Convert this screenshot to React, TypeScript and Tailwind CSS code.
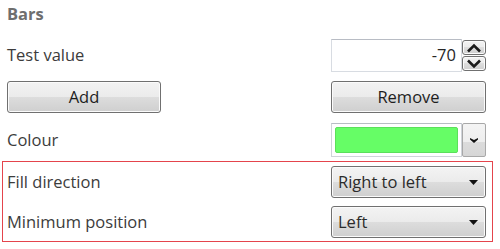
import React from "react";

const btn =
  "rounded-[3px] border border-[#707070] bg-[linear-gradient(to_bottom,#f3f3f3_0%,#ebebeb_50%,#dddddd_50%,#cfcfcf_100%)] shadow-[inset_0_0_0_1px_#fbfbfb]";

function Chevron({ up }: { up?: boolean }) {
  return (
    <svg width="16" height="10" viewBox="0 0 16 10">
      <polyline
        points={up ? "2,8.5 8,2.5 14,8.5" : "2,1.5 8,7.5 14,1.5"}
        fill="none"
        stroke="#1b1b1b"
        strokeWidth="2.6"
      />
    </svg>
  );
}

function Triangle() {
  return (
    <svg width="9" height="5" viewBox="0 0 9 5">
      <polygon points="0,0 9,0 4.5,5" fill="#111" />
    </svg>
  );
}

function Combo({ value }: { value: string }) {
  return (
    <div
      className={
        btn +
        " w-[155px] h-[32px] flex items-center justify-between pl-[6px] pr-[7px] text-[#2b2b2b]"
      }
    >
      <span>{value}</span>
      <Triangle />
    </div>
  );
}

export default function App() {
  return (
    <div className="w-[500px] h-[249px] overflow-hidden bg-white pl-[7px] pr-[14px] font-['Open_Sans',sans-serif] text-[16.5px] leading-none text-[#3c3c3c]">
      <div className="h-[29px] flex items-center font-bold text-[#6e6e6e]">Bars</div>

      <div className="mt-[10px] h-[33px] flex items-center justify-between">
        <span>Test value</span>
        <div className="flex items-center h-full">
          <div className="w-[131px] h-full border border-[#d8dce2] border-t-[#b8bcc4] bg-white flex items-center justify-end pr-[5px] text-[#262626]">
            -70
          </div>
          <div className="w-[24px] h-[31px] flex flex-col gap-px">
            <div className={btn + " flex-1 flex items-center justify-center"}>
              <Chevron up />
            </div>
            <div className={btn + " flex-1 flex items-center justify-center"}>
              <Chevron />
            </div>
          </div>
        </div>
      </div>

      <div className="mt-[9px] h-[32px] flex justify-between text-[#1e1e1e]">
        <div className={btn + " w-[154px] flex items-center justify-center"}>Add</div>
        <div className={btn + " w-[155px] flex items-center justify-center"}>Remove</div>
      </div>

      <div className="mt-[10px] h-[34px] flex items-center justify-between">
        <span>Colour</span>
        <div className="flex h-full">
          <div className="w-[131px] h-full border border-[#d0d4da] border-t-[#b8bcc4] bg-white p-[3px]">
            <div className="w-full h-full rounded-[2px] bg-[#66fd66] border border-[#5be05b]" />
          </div>
          <div className="w-[24px] h-full rounded-[2px] border border-[#a8a8a8] bg-[linear-gradient(to_bottom,#f4f4f4_0%,#eeeeee_55%,#dcdcdc_55%,#d6d6d6_100%)] flex items-center justify-center">
            <svg width="8" height="5" viewBox="0 0 8 5">
              <path d="M0 0 L4 2 L8 0 L8 1.5 L4 5 L0 1.5 Z" fill="#111" />
            </svg>
          </div>
        </div>
      </div>

      <div className="mt-[4px] -ml-[5px] -mr-[7px] border border-[#e4444c] pl-[4px] pr-[6px] pt-[4px] pb-[3px] flex flex-col gap-[8px]">
        <div className="h-[32px] flex items-center justify-between">
          <span>Fill direction</span>
          <Combo value="Right to left" />
        </div>
        <div className="h-[32px] flex items-center justify-between">
          <span>Minimum position</span>
          <Combo value="Left" />
        </div>
      </div>
    </div>
  );
}
